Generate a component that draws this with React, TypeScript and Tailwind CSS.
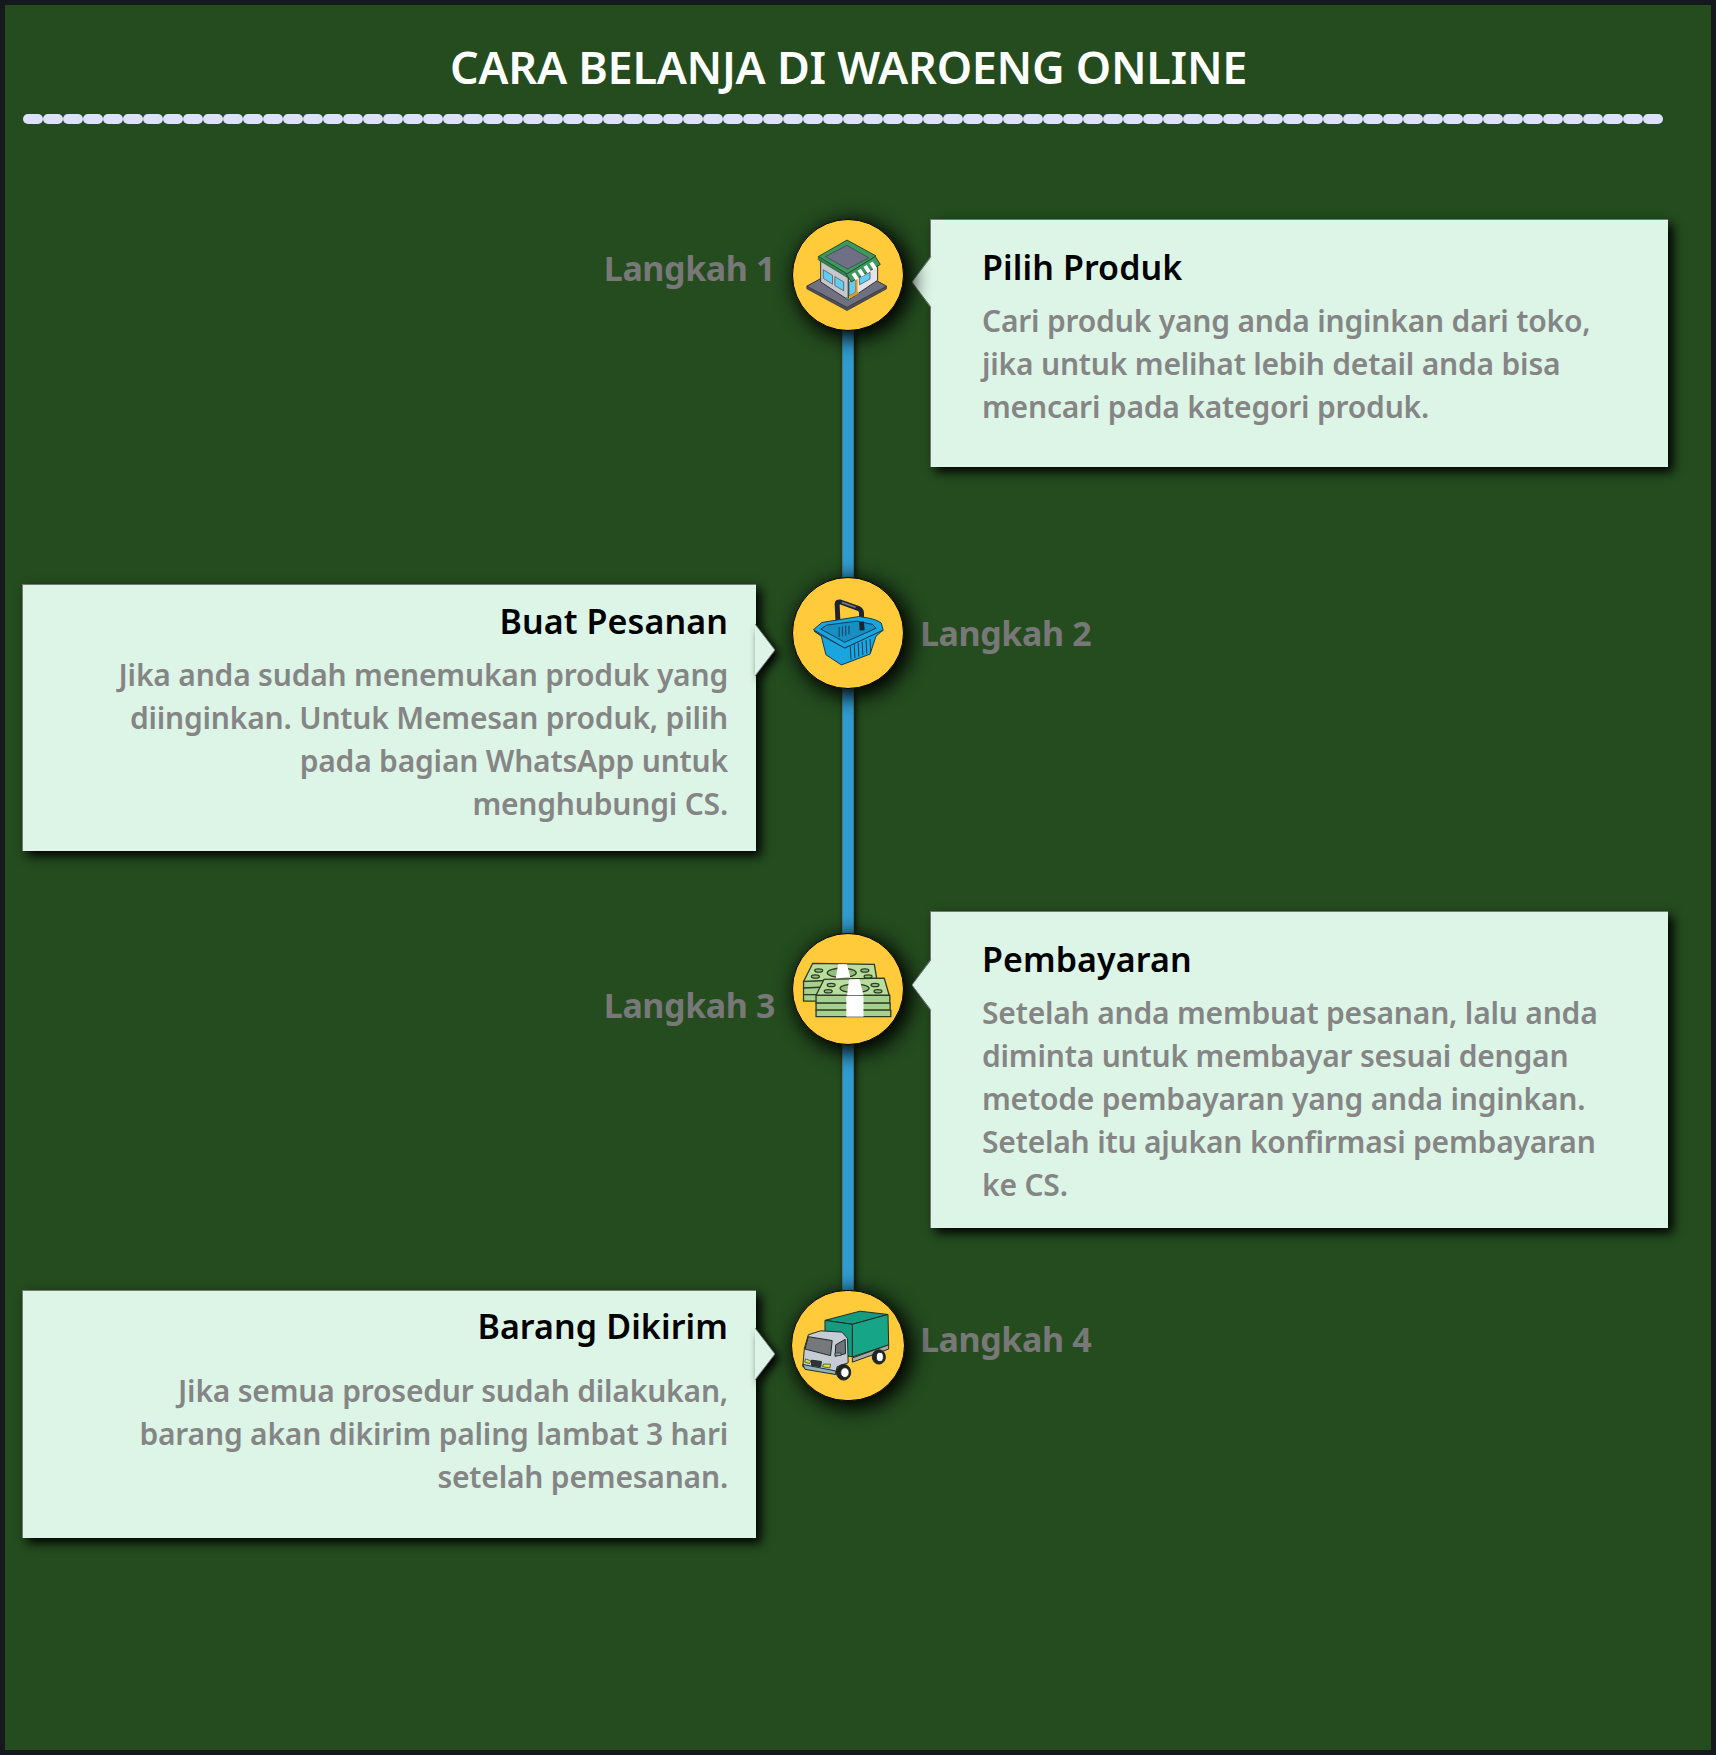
import React from 'react'

const Store = () => (
  <svg viewBox="68 58 334 332" className="h-full w-full">
    <polygon points="110,258 232,192 352,258 352,266 232,332 110,266" fill="#4d4e5a" stroke="#2b2b33" strokeWidth="2" />
    <polygon points="110,258 232,192 352,258 232,322" fill="#6f7080" stroke="#2b2b33" strokeWidth="2" />
    <polygon points="152,178 236,228 236,300 152,245" fill="#c8c8cc" stroke="#333" strokeWidth="3" />
    <polygon points="236,228 325,180 325,240 236,300" fill="#e4e4e6" stroke="#333" strokeWidth="3" />
    <polygon points="160,208 188,225 188,252 160,234" fill="#62cdf3" stroke="#444" strokeWidth="2" />
    <polygon points="195,229 222,245 222,272 195,256" fill="#62cdf3" stroke="#444" strokeWidth="2" />
    <polygon points="270,232 302,216 302,236 270,254" fill="#62cdf3" stroke="#444" strokeWidth="2" />
    <polygon points="238,246 258,234 258,276 238,288" fill="#62cdf3" stroke="#444" strokeWidth="2" />
    <polygon points="258,234 264,230 264,274 258,278" fill="#e09a1c" />
    <polygon points="238,288 264,274 268,280 240,296" fill="#e09a1c" />
    <polygon points="228,290 240,296 240,302 228,296" fill="#3d9a5f" />
    <polygon points="145,168 232,118 320,166 234,222" fill="#3d9a5f" stroke="#244a33" strokeWidth="3" />
    <polygon points="145,168 234,222 234,232 145,178" fill="#2f8450" stroke="#244a33" strokeWidth="2" />
    <polygon points="166,168 232,134 298,172 234,206" fill="#707085" stroke="#3a3a48" strokeWidth="2" />
    <polygon points="230,222 318,168 333,192 245,245" fill="#3d9a5f" stroke="#244a33" strokeWidth="3" />
    <polygon points="246,222 256,216 268,234 258,240" fill="#fff" />
    <polygon points="264,211 274,205 286,223 276,229" fill="#fff" />
    <polygon points="282,200 292,194 304,212 294,218" fill="#fff" />
    <polygon points="300,189 310,183 322,201 312,207" fill="#fff" />
  </svg>
)

const Basket = () => (
  <svg viewBox="188 50 334 332" className="h-full w-full">
    <path d="M325 192 L322 128 Q322 120 332 122 L388 142 Q396 146 396 156 L396 208" fill="none" stroke="#1b2430" strokeWidth="15" strokeLinejoin="round" />
    <path d="M336 123 L378 138" fill="none" stroke="#77787f" strokeWidth="5" />
    <path d="M250 206 L276 184 L388 166 Q440 172 456 186 L462 208 L345 262 Z" fill="#19a5de" stroke="#123a55" strokeWidth="3" strokeLinejoin="round" />
    <path d="M272 204 L290 192 L382 180 L430 190 L440 202 L345 244 Z" fill="#1690c4" stroke="#123a55" strokeWidth="3" strokeLinejoin="round" />
    <path d="M328 228 L328 198 M338 226 L338 196 M348 224 L348 194 M358 220 L358 194" fill="none" stroke="#123a55" strokeWidth="3" />
    <path d="M398 208 L396 182" fill="none" stroke="#1b2430" strokeWidth="15" />
    <path d="M252 210 L272 222 L345 262 L460 208 L440 226 L422 280 L335 313 L288 282 L274 226 Z" fill="#19a5de" stroke="#123a55" strokeWidth="3" strokeLinejoin="round" />
    <path d="M364 296 L362 256 M376 292 L374 250 M388 288 L386 246 M400 283 L398 242 M412 278 L410 238 M424 274 L422 234" fill="none" stroke="#123a55" strokeWidth="3" />
  </svg>
)

const Money = () => (
  <svg viewBox="68 55 334 332" className="h-full w-full">
    <g stroke="#2d3a24" strokeWidth="4" strokeLinejoin="round">
      <polygon points="100,198 322,188 322,210 100,220" fill="#a6d18c" />
      <polygon points="100,218 322,208 322,240 100,238" fill="#a6d18c" />
      <polygon points="100,238 200,238 200,258 100,258" fill="#a6d18c" />
      <polygon points="128,143 315,146 322,188 100,198" fill="#b9dd9d" />
      <ellipse cx="216" cy="172" rx="44" ry="14" fill="#93be7d" />
      <ellipse cx="146" cy="165" rx="12" ry="5" fill="#93be7d" />
      <ellipse cx="136" cy="183" rx="12" ry="5" fill="#93be7d" />
      <ellipse cx="286" cy="165" rx="12" ry="5" fill="#93be7d" />
      <ellipse cx="296" cy="183" rx="12" ry="5" fill="#93be7d" />
      <polygon points="138,240 362,240 362,264 138,264" fill="#a6d18c" />
      <polygon points="138,264 363,264 363,285 138,285" fill="#a6d18c" />
      <polygon points="138,285 365,285 365,305 138,305" fill="#a6d18c" />
      <polygon points="162,192 345,188 360,240 138,240" fill="#b9dd9d" />
      <ellipse cx="255" cy="219" rx="44" ry="13" fill="#93be7d" />
      <ellipse cx="184" cy="209" rx="12" ry="5" fill="#93be7d" />
      <ellipse cx="175" cy="228" rx="12" ry="5" fill="#93be7d" />
      <ellipse cx="317" cy="209" rx="12" ry="5" fill="#93be7d" />
      <ellipse cx="326" cy="228" rx="12" ry="5" fill="#93be7d" />
    </g>
    <polygon points="205,146 232,146 242,186 198,188" fill="#fff" />
    <polygon points="238,192 270,191 282,240 232,240" fill="#fff" />
    <rect x="230" y="242" width="52" height="63" fill="#fff" />
  </svg>
)

const Truck = () => (
  <svg viewBox="182 32 343 330" className="h-full w-full">
    <g stroke="#1c2a26" strokeWidth="3" strokeLinejoin="round">
      <polygon points="283,120 390,92 476,102 367,132" fill="#149b80" />
      <polygon points="283,120 367,132 367,232 283,215" fill="#149b80" />
      <polygon points="367,132 476,102 478,195 367,232" fill="#17a588" />
      <polygon points="367,235 478,195 478,208 367,248" fill="#a9a9a9" />
      <ellipse cx="448" cy="232" rx="20" ry="22" fill="#222" />
      <ellipse cx="451" cy="232" rx="11" ry="14" fill="#fff" />
      <polygon points="232,164 270,152 335,156 352,175 354,250 320,262 316,284 215,262 220,205" fill="#c5ccd3" />
      <polygon points="232,170 305,182 300,228 222,208" fill="#77787c" />
      <polygon points="316,195 345,178 346,222 314,230" fill="#6f7278" />
      <polygon points="215,255 316,275 316,286 222,270" fill="#8fb2b8" />
      <polygon points="242,242 272,246 270,262 242,258" fill="#333" />
      <polygon points="223,238 240,244 236,252 221,248" fill="#d5e82c" strokeWidth="2" />
      <polygon points="278,254 300,254 298,266 276,262" fill="#d5e82c" strokeWidth="2" />
      <rect x="314" y="220" width="18" height="8" fill="#8fa0a8" strokeWidth="2" />
      <ellipse cx="340" cy="279" rx="22" ry="24" fill="#222" />
      <ellipse cx="344" cy="280" rx="13" ry="15" fill="#fff" />
    </g>
  </svg>
)

const Pills = () => (
  <div className="flex h-[10px]">
    {Array.from({ length: 82 }).map((_, i) => (
      <span key={i} className="h-[10px] w-5 rounded-full bg-[#dde1ff]" />
    ))}
  </div>
)

const Line = () => <div className="w-3 flex-1 border-x border-[#4d7589] bg-[#2e9cd0] shadow-[2px_2px_6px_rgba(0,0,0,0.8)]" />

const Circle = ({ children, wide }: { children: React.ReactNode; wide?: boolean }) => (
  <div className={wide ? 'relative z-10 h-[111px] w-[114px] shrink-0 overflow-hidden rounded-full border border-black bg-[#ffcb3b] shadow-[5px_5px_20px_3px_#000]' : 'relative z-10 h-[112px] w-[112px] shrink-0 overflow-hidden rounded-full border border-black bg-[#ffcb3b] shadow-[5px_5px_20px_3px_#000]'}>
    {children}
  </div>
)

const Label = ({ children }: { children: React.ReactNode }) => (
  <span className="text-[34px] font-bold leading-none tracking-[-0.4px] text-[#787878]">{children}</span>
)

const ArrowLeft = ({ top }: { top: string }) => (
  <svg viewBox="0 0 20 60" preserveAspectRatio="none" className={`absolute -left-[19px] h-[52px] w-5 ${top}`}>
    <polygon points="20,0 0,30 20,60" fill="#ddf5e7" />
    <polyline points="19,0 0,30 19,60" fill="none" stroke="#777" strokeWidth="1" />
  </svg>
)

const ArrowRight = ({ top }: { top: string }) => (
  <svg viewBox="0 0 20 60" preserveAspectRatio="none" className={`absolute -right-[19px] h-[52px] w-5 drop-shadow-[4px_4px_4px_#000] ${top}`}>
    <polygon points="0,0 20,30 0,60" fill="#ddf5e7" />
    <polyline points="0,0 20,30 0,60" fill="none" stroke="#777" strokeWidth="1" />
  </svg>
)

const Title = ({ children }: { children: React.ReactNode }) => (
  <h3 className="text-[34px] font-semibold leading-[44px] tracking-[0.1px] text-black">{children}</h3>
)

const Body = ({ children }: { children: React.ReactNode }) => (
  <p className="text-[30px] font-semibold leading-[43px] tracking-[-0.2px] text-[#858585]">{children}</p>
)

const cardCls = 'relative border-t border-l border-[#777] bg-[#ddf5e7] shadow-[5px_5px_10px_#000]'

const App = () => {
  return (
    <div className="h-[1755px] w-[1716px] border-[5px] border-[#15181c] bg-[#244c1f] pl-[18px] pr-[37px] font-['Noto_Sans','Open_Sans',sans-serif]">
      <h1 className="pt-[38px] text-center text-[45px] font-semibold leading-[48px] tracking-[-0.3px] text-white">CARA BELANJA DI WAROENG ONLINE</h1>
      <div className="mt-[23px]">
        <Pills />
      </div>

      <div className="mt-[95px] grid grid-cols-[733px_174px_738px]">
        {/* langkah 1 */}
        <div className="flex h-[358px] justify-end">
          <div className="mr-[-19px] mt-[32px]"><Label>Langkah 1</Label></div>
        </div>
        <div className="flex flex-col items-center pl-[10px]">
          <Circle><Store /></Circle>
          <Line />
        </div>
        <div className={`${cardCls} h-[248px] pl-[51px] pr-[40px] pt-[25px]`}>
          <ArrowLeft top="top-[36px]" />
          <Title>Pilih Produk</Title>
          <div className="mt-[10px]">
            <Body>Cari produk yang anda inginkan dari toko, jika untuk melihat lebih detail anda bisa mencari pada kategori produk.</Body>
          </div>
        </div>

        {/* langkah 2 */}
        <div className={`${cardCls} -ml-px mt-[7px] h-[267px] pl-[80px] pr-[28px] pt-[14px] text-right`}>
          <ArrowRight top="top-[39px]" />
          <Title>Buat Pesanan</Title>
          <div className="mt-[10px]">
            <Body>Jika anda sudah menemukan produk yang diinginkan. Untuk Memesan produk, pilih pada bagian WhatsApp untuk menghubungi CS.</Body>
          </div>
        </div>
        <div className="flex h-[356px] flex-col items-center pl-[10px]">
          <Circle><Basket /></Circle>
          <Line />
        </div>
        <div className="ml-[-10px] mt-[39px]"><Label>Langkah 2</Label></div>

        {/* langkah 3 */}
        <div className="flex h-[357px] justify-end">
          <div className="mr-[-19px] mt-[55px]"><Label>Langkah 3</Label></div>
        </div>
        <div className="flex flex-col items-center pl-[10px]">
          <Circle><Money /></Circle>
          <Line />
        </div>
        <div className={`${cardCls} z-20 mt-[-22px] h-[317px] pl-[51px] pr-[40px] pt-[25px]`}>
          <ArrowLeft top="top-[47px]" />
          <Title>Pembayaran</Title>
          <div className="mt-[10px]">
            <Body>Setelah anda membuat pesanan, lalu anda diminta untuk membayar sesuai dengan metode pembayaran yang anda inginkan. Setelah itu ajukan konfirmasi pembayaran ke CS.</Body>
          </div>
        </div>

        {/* langkah 4 */}
        <div className={`${cardCls} -ml-px h-[248px] pl-[60px] pr-[28px] pt-[13px] text-right`}>
          <ArrowRight top="top-[37px]" />
          <Title>Barang Dikirim</Title>
          <div className="mt-[21px]">
            <Body>Jika semua prosedur sudah dilakukan, barang akan dikirim paling lambat 3 hari setelah pemesanan.</Body>
          </div>
        </div>
        <div className="flex flex-col items-center pl-[10px]">
          <Circle wide><Truck /></Circle>
        </div>
        <div className="ml-[-10px] mt-[32px]"><Label>Langkah 4</Label></div>
      </div>
    </div>
  )
}

export default App
